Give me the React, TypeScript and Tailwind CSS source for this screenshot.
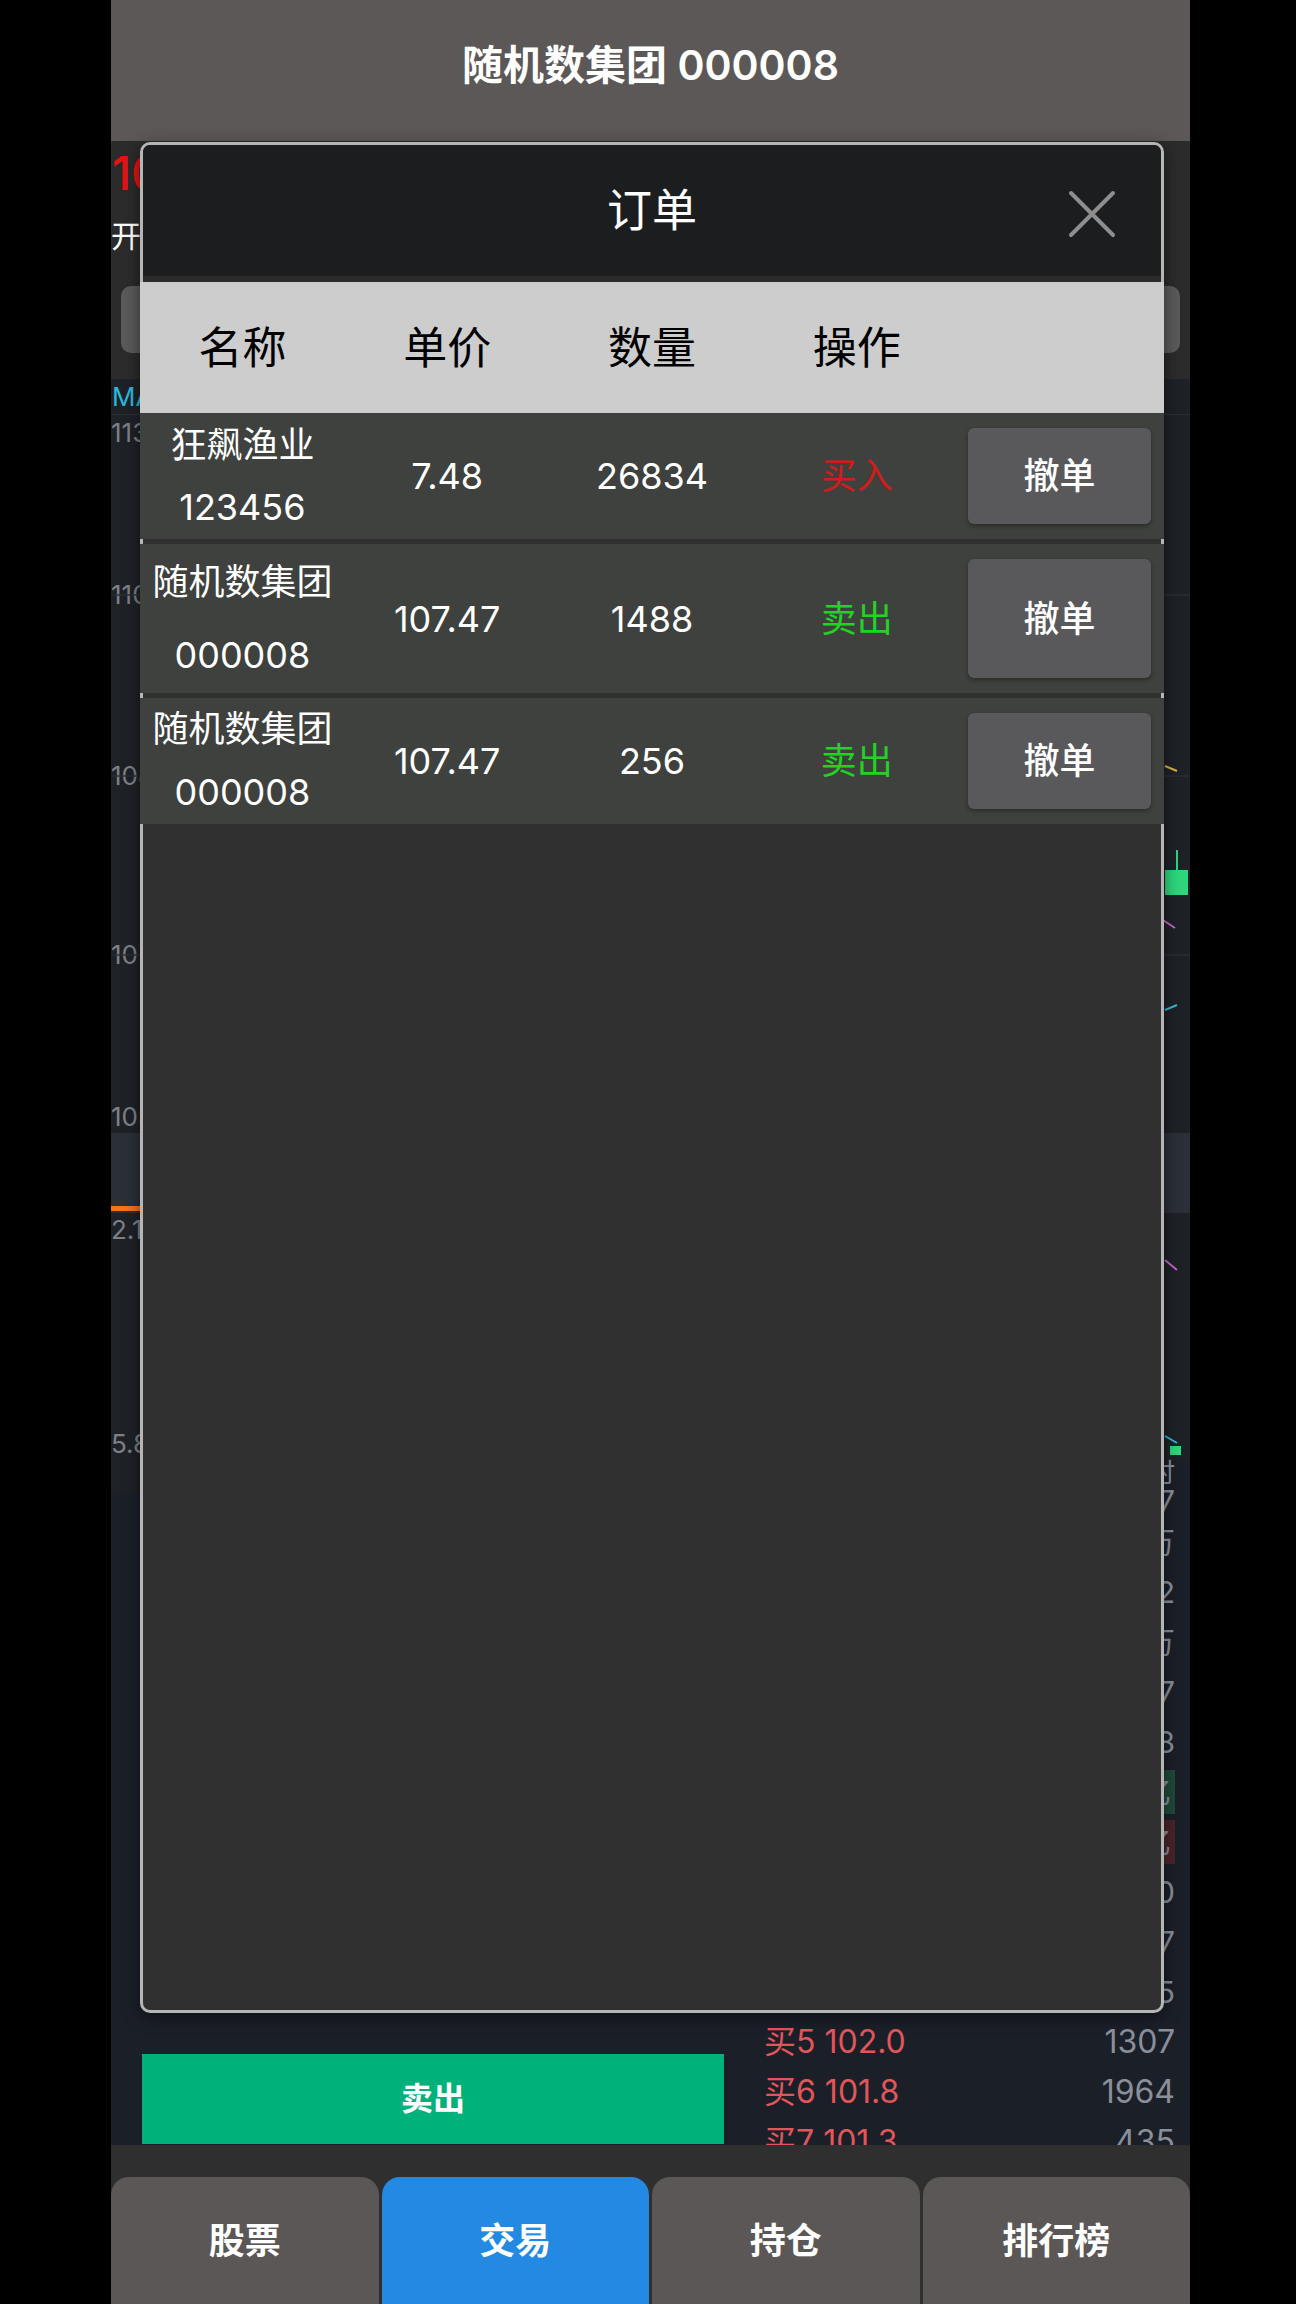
const orders = [
  { name: '狂飙渔业', code: '123456', price: '7.48', qty: '26834', side: 'buy', h: 'h-[126px]', lead: 'leading-[62px]' },
  { name: '随机数集团', code: '000008', price: '107.47', qty: '1488', side: 'sell', h: 'h-[149px]', lead: 'leading-[73px]' },
  { name: '随机数集团', code: '000008', price: '107.47', qty: '256', side: 'sell', h: 'h-[126px]', lead: 'leading-[63px]' },
];

const stats = [
  { label: '成交量', value: '12.6万' },
  { label: '最低', value: '101.32' },
  { label: '外盘', value: '6.8万' },
  { label: '换手', value: '2.17' },
  { label: '量比', value: '1.08' },
  { label: '流入', value: '1.2亿', tone: 'bg-[#1e4a3a]' },
  { label: '流出', value: '0.9亿', tone: 'bg-[#4a242a]' },
  { label: '买2 107.0', value: '520' },
  { label: '买3 106.2', value: '1287' },
  { label: '买4 104.9', value: '865' },
];

const book = [
  { label: '买5', price: '102.0', qty: '1307' },
  { label: '买6', price: '101.8', qty: '1964' },
  { label: '买7', price: '101.3', qty: '435' },
];

const tabs = ['股票', '交易', '持仓', '排行榜'];

const ChartLines = () => (
  <svg className="pointer-events-none absolute inset-0" width="1079" height="1081" viewBox="0 0 1079 1081">
    <line x1="0" y1="216" x2="1079" y2="216" stroke="#2b2f35" strokeWidth="1.5" />
    <line x1="0" y1="397" x2="1079" y2="397" stroke="#2b2f35" strokeWidth="1.5" />
    <line x1="0" y1="576" x2="1079" y2="576" stroke="#2b2f35" strokeWidth="1.5" />
    <line x1="1054" y1="387" x2="1066" y2="392" stroke="#d9b342" strokeWidth="2" />
    <line x1="1066" y1="471" x2="1066" y2="492" stroke="#2fd67c" strokeWidth="2" />
    <rect x="1054" y="491" width="23" height="25" fill="#2fd67c" />
    <line x1="1052" y1="541" x2="1064" y2="549" stroke="#c064c8" strokeWidth="2" />
    <line x1="1054" y1="631" x2="1066" y2="626" stroke="#36b6d6" strokeWidth="2" />
    <line x1="1054" y1="881" x2="1066" y2="891" stroke="#c064c8" strokeWidth="2" />
    <line x1="1054" y1="1057" x2="1066" y2="1064" stroke="#36b6d6" strokeWidth="2" />
    <rect x="1059" y="1067" width="11" height="9" fill="#2fd67c" />
  </svg>
);

export default function App() {
  return (
    <div className="h-[2304px] overflow-hidden bg-black font-['Inter','Noto_Sans_CJK_SC',sans-serif]">
      <div className="relative ml-[111px] flex h-[2304px] w-[1079px] flex-col">
        <header className="flex h-[141px] shrink-0 items-center justify-center bg-[#5c5857] pb-[9px] text-[41px] font-semibold text-white">
          随机数集团 000008
        </header>

        <main className="flex h-[2004px] shrink-0 flex-col overflow-hidden bg-[#1e2126]">
          {/* quote header */}
          <section className="h-[238px] shrink-0 bg-[#2b2b2b]">
            <div className="flex h-[64px] items-center pl-[1px]">
              <span className="text-[46px] font-medium text-[#e31414]">107.47</span>
            </div>
            <div className="flex h-[62px] items-center text-[30px] text-white">
              <span>开 105.20</span>
            </div>
            <div className="mt-[19px] flex h-[67px] gap-[12px] px-[10px]">
              <div className="flex-1 rounded-[10px] bg-[#5a5a5c]" />
              <div className="flex-1 rounded-[10px] bg-[#5a5a5c]" />
              <div className="flex-1 rounded-[10px] bg-[#5a5a5c]" />
              <div className="flex-1 rounded-[10px] bg-[#5a5a5c]" />
              <div className="flex-1 rounded-[10px] bg-[#5a5a5c]" />
            </div>
          </section>

          {/* chart */}
          <section className="relative h-[1081px] shrink-0">
            <ChartLines />
            <div className="flex h-[35px] items-center pl-[1px] text-[26px]">
              <span className="text-[#2ab8dc]">MA5: 107.62</span>
            </div>
            <div className="h-[719px] border-t border-[#2c3036] text-[26px] leading-[36px] text-[#7d8187]">
              <div>113.27</div>
              <div className="mt-[126px]">110.71</div>
              <div className="mt-[145px]">108.15</div>
              <div className="mt-[143px]">105.59</div>
              <div className="mt-[126px]">103.03</div>
            </div>
            <div className="flex h-[80px] flex-col justify-end bg-[#2b2f37] pb-[2px]">
              <div className="h-[5px] w-[60px] bg-[#f07522]" />
            </div>
            <div className="h-[246px] text-[26px] leading-[30px] text-[#7d8187]">
              <div className="mt-[2px]">2.1万</div>
              <div className="mt-[184px]">5.8千</div>
            </div>
          </section>

          {/* trade panel + order book */}
          <section className="flex h-[685px] shrink-0 bg-[#1b1f28]">
            <div className="w-[613px] shrink-0">
              <div className="h-[32px] bg-[#1e2126]" />
              <div className="pl-[31px]">
                <div className="mt-[24px] h-[84px] rounded-[8px] bg-[#2a2f3a]" />
                <div className="mt-[24px] h-[84px] rounded-[8px] bg-[#2a2f3a]" />
                <div className="mt-[80px] h-[40px]" />
                <div className="mt-[36px] h-[90px] bg-[#e0343a]" />
                <div className="mt-[100px] flex h-[90px] items-center justify-center bg-[#00b27a] text-[32px] font-bold text-white">
                  卖出
                </div>
              </div>
            </div>

            <div className="ml-[40px] w-[411px] shrink-0 text-[#8a8f99]">
              <div className="h-[26px] text-right text-[26px] leading-[26px]">时</div>
              <div className="flex h-[31px] items-center justify-end text-[30px] leading-[31px]">
                <span>113.27</span>
              </div>
              {stats.map((s) => (
                <div key={s.label} className="flex h-[50px] items-center justify-end text-[30px]">
                  <span className={s.tone ? `${s.tone} px-[4px] leading-[44px]` : ''}>{s.value}</span>
                </div>
              ))}
              {book.map((b) => (
                <div key={b.label} className="flex h-[50px] items-center justify-between text-[32px]">
                  <span className="text-[#e0565b]">
                    {b.label} {b.price}
                  </span>
                  <span>{b.qty}</span>
                </div>
              ))}
            </div>
          </section>
        </main>

        <nav className="grid h-[159px] shrink-0 grid-cols-4 gap-[3px] bg-[#2f2f2f] pt-[32px]">
          {tabs.map((t) => (
            <div
              key={t}
              className={
                'flex items-center justify-center rounded-t-[18px] text-[36px] font-bold text-white ' +
                (t === '交易' ? 'bg-[#2389e3]' : 'bg-[#5b5756]')
              }
            >
              {t}
            </div>
          ))}
        </nav>

        {/* order dialog */}
        <div className="absolute left-[29px] top-[142px] h-[1871px] w-[1024px] rounded-[10px] border-[3px] border-[#b5b5b5] bg-[#303030] shadow-[0_4px_16px_rgba(0,0,0,0.5)]">
          <div className="relative flex h-[131px] items-center justify-center rounded-t-[7px] bg-[#1c1d1f]">
            <span className="text-[45px] text-white">订单</span>
            <button className="absolute right-[45px] top-[45px] h-[48px] w-[48px]">
              <svg width="48" height="48" viewBox="0 0 48 48">
                <path d="M3 3 L45 45 M45 3 L3 45" stroke="#8e8e8e" strokeWidth="4" strokeLinecap="round" />
              </svg>
            </button>
          </div>
          <div className="h-[6px] bg-[#2b2b2b]" />
          <div className="-mx-[3px] grid h-[131px] grid-cols-5 items-center bg-[#cdcdcd] text-center text-[44px] text-black">
            <span>名称</span>
            <span>单价</span>
            <span>数量</span>
            <span>操作</span>
            <span />
          </div>
          {orders.map((o, i) => (
            <div
              key={i}
              className={`-mx-[3px] grid grid-cols-5 items-center bg-[#3e413e] text-center text-[36px] text-white ${o.h} ${i > 0 ? 'mt-[5px]' : ''}`}
            >
              <div className={o.lead}>
                <div>{o.name}</div>
                <div>{o.code}</div>
              </div>
              <span>{o.price}</span>
              <span>{o.qty}</span>
              <span className={o.side === 'buy' ? 'text-[#d11c1c]' : 'text-[#22d322]'}>
                {o.side === 'buy' ? '买入' : '卖出'}
              </span>
              <div className="h-full py-[15px] pl-[9px] pr-[13px]">
                <button className="flex h-full w-full items-center justify-center rounded-[6px] bg-[#59595b] text-[36px] font-medium text-white shadow-[0_2px_4px_rgba(0,0,0,0.35)]">
                  撤单
                </button>
              </div>
            </div>
          ))}
        </div>
      </div>
    </div>
  );
}
